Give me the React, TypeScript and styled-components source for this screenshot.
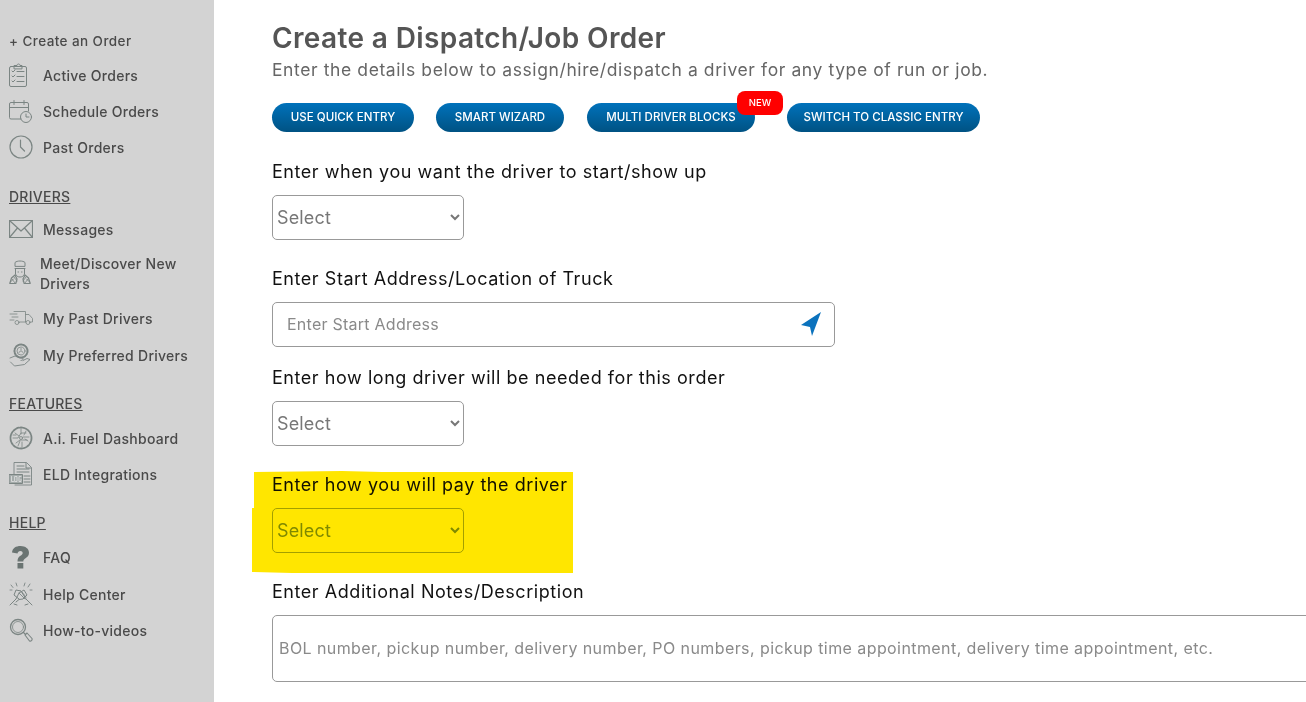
import React from "react";
import styled, { createGlobalStyle } from "styled-components";

const FONT = `Inter, "Open Sans", "Liberation Sans", sans-serif`;

const Global = createGlobalStyle`
  html, body { margin: 0; padding: 0; background: #fff; height: 100%; overflow: hidden; }
  #root { height: 702px; }
`;

const Page = styled.div`
  position: relative;
  display: flex;
  width: 1306px;
  height: 702px;
  overflow: hidden;
  font-family: ${FONT};
`;

const Sidebar = styled.nav`
  flex: 0 0 214px;
  box-sizing: border-box;
  padding: 32px 0 0 9px;
  background: #d3d3d3;
  color: #4a4a4a;
  font-size: 14px;
  letter-spacing: 0.27px;
  font-weight: 500;
`;

const CreateLink = styled.div`
  height: 18px;
  line-height: 18px;
  margin-bottom: 7px;
  font-size: 13.5px;
  letter-spacing: 0.42px;
`;

const Group = styled.div<{ $gap?: number }>`
  margin-bottom: ${(p) => p.$gap ?? 0}px;
`;

const Heading = styled.div<{ $mb: number }>`
  height: 18px;
  line-height: 18px;
  margin-bottom: ${(p) => p.$mb}px;
  text-decoration: underline;
`;

const Row = styled.div<{ $h?: number }>`
  display: flex;
  align-items: center;
  height: ${(p) => p.$h ?? 36}px;
`;

const IconSlot = styled.span`
  flex: 0 0 34px;
  display: flex;
  align-items: center;
  color: #7b8583;
`;

const TwoLine = styled.span`
  margin-left: -3px;
  padding-top: 2px;
  line-height: 20px;
  width: 150px;
`;

const Main = styled.main`
  flex: 1;
  min-width: 0;
  box-sizing: border-box;
  padding: 20px 0 0 58px;
`;

const Title = styled.h1`
  margin: 0;
  height: 36px;
  line-height: 36px;
  font-size: 28px;
  letter-spacing: 0.37px;
  font-weight: 600;
  color: #555;
`;

const Subtitle = styled.p`
  margin: 2px 0 0;
  height: 24px;
  line-height: 24px;
  font-size: 17.5px;
  letter-spacing: 0.6px;
  font-weight: 400;
  color: #666;
`;

const Buttons = styled.div`
  display: flex;
  margin-top: 21px;
  height: 29px;
`;

const Pill = styled.div<{ $w: number; $ml?: number }>`
  position: relative;
  box-sizing: border-box;
  width: ${(p) => p.$w}px;
  margin-left: ${(p) => p.$ml ?? 0}px;
  height: 29px;
  line-height: 29px;
  border-radius: 15px;
  background: linear-gradient(#0072bb, #005283);
  color: #fff;
  font-size: 11.5px;
  letter-spacing: 0.03px;
  font-weight: 500;
  text-align: center;
`;

const Badge = styled.span`
  position: absolute;
  top: -12px;
  right: -28px;
  width: 46px;
  height: 24px;
  line-height: 24px;
  border-radius: 8px;
  background: #ff0000;
  color: #fff;
  font-size: 9.5px;
  letter-spacing: 0;
  text-align: center;
`;

const Label = styled.label<{ $top: number }>`
  display: block;
  margin-top: ${(p) => p.$top}px;
  height: 24px;
  line-height: 24px;
  font-size: 18px;
  letter-spacing: 0.55px;
  font-weight: 400;
  color: #111;
`;

const Picker = styled.select<{ $tinted?: boolean }>`
  display: block;
  box-sizing: border-box;
  width: 192px;
  height: 45px;
  margin-top: 11px;
  padding: 0;
  background: #fff;
  border: 1px solid ${(p) => (p.$tinted ? "#a3b000" : "#999")};
  border-radius: 5px;
  color: ${(p) => (p.$tinted ? "#7f9800" : "#777")};
  font-family: ${FONT};
  font-size: 18px;
  letter-spacing: 0.15px;
`;

const AddressBox = styled.div`
  display: flex;
  align-items: center;
  box-sizing: border-box;
  width: 563px;
  height: 45px;
  margin-top: 11px;
  padding: 0 12px 0 14px;
  border: 1px solid #999;
  border-radius: 5px;
`;

const AddressInput = styled.input`
  flex: 1;
  min-width: 0;
  border: 0;
  outline: 0;
  padding: 0 0 2px;
  background: transparent;
  font-family: ${FONT};
  font-size: 16px;
  letter-spacing: 0.25px;
  &::placeholder { color: #8a8a8a; opacity: 1; }
`;

const Notes = styled.textarea`
  display: block;
  box-sizing: border-box;
  width: 1100px;
  height: 67px;
  margin-top: 11px;
  padding: 22px 6px 0;
  border: 1px solid #999;
  border-radius: 5px;
  outline: 0;
  resize: none;
  font-family: ${FONT};
  font-size: 16px;
  letter-spacing: 0.42px;
  line-height: 20px;
  &::placeholder { color: #8a8a8a; opacity: 1; }
`;

const Highlight = styled.div`
  position: absolute;
  left: 252px;
  top: 471px;
  width: 321px;
  height: 102px;
  background: #ffe600;
  mix-blend-mode: multiply;
  pointer-events: none;
  clip-path: polygon(2px 1px, 90px 0, 130px 1px, 321px 1px, 321px 102px, 40px 102px, 0 101px, 0 37px, 2px 37px);
`;

const Svg = ({ w = 24, h = 24, children }: { w?: number; h?: number; children: React.ReactNode }) => (
  <svg width={w} height={h} viewBox={`0 0 ${w} ${h}`} fill="none" stroke="currentColor" strokeWidth="1" strokeLinecap="round" strokeLinejoin="round">
    {children}
  </svg>
);

const Clipboard = () => (
  <Svg w={20} h={24}>
    <rect x="0.5" y="3.5" width="17" height="20" rx="1.5" />
    <path d="M5 5.5V2.5h3c0-2 3-2 3 0h2v3z" />
    <path d="M3 8l1 1 2-2M3 13l1 1 2-2M3 18l1 1 2-2M8 8.500h7M8 13.500h7M8 18.500h7" />
  </Svg>
);
const Calendar = () => (
  <Svg w={24} h={24}>
    <path d="M12 20H2A1.500 1.500 0 0 1 .5 18.500V5A1.500 1.500 0 0 1 2 3.500h16A1.500 1.500 0 0 1 19.500 5V12" />
    <path d="M.5 8.500h19M5 1.500v4M15 1.500v4" />
    <circle cx="17" cy="18" r="5.500" />
    <path d="M17 15v3h3" />
  </Svg>
);
const Clock = () => (
  <Svg w={24} h={24}>
    <circle cx="12" cy="12" r="11" strokeWidth="1.2" />
    <path d="M11.500 5v7l4 4" strokeWidth="1.2" />
  </Svg>
);
const Mail = () => (
  <Svg w={24} h={18}>
    <rect x="0.5" y="0.5" width="23" height="17" strokeWidth="1.2" />
    <path d="M.5.5L12 11 23.500.5M.5 17.500l8-9.500M23.500 17.500l-8-9.500" strokeWidth="1.2" />
  </Svg>
);
const Chauffeur = () => (
  <Svg w={22} h={26}>
    <path d="M6 6V2.500C8 .5 14 .5 16 2.500V6zM6 8.500h10M6.500 9v5c1 4 8 4 9 0V9" />
    <path d="M9 12h.5M12.500 12h.5" />
    <path d="M6 15L2.500 18 .8 23.500h6L8 19zM16 15l3.500 3 1.700 5.500h-6L14 19z" strokeWidth="1.200" />
    <path d="M3 19l3 4M5 17l3 4M1.500 22l3-3M19 19l-3 4M17 17l-3 4M20.500 22l-3-3" strokeWidth=".8" />
  </Svg>
);
const Truck = () => (
  <Svg w={24} h={16}>
    <path d="M5 1.500h11.500v10.500H10.500M16.500 4.500h3.500l3.500 4v3.500h-2M16.500 12h.5" strokeWidth=".8" />
    <circle cx="8" cy="12.500" r="2" strokeWidth=".8" />
    <circle cx="19" cy="12.500" r="2" strokeWidth=".8" />
    <path d="M1 4h7M3 7h6M1 10h4" strokeWidth=".8" />
  </Svg>
);
const HandGear = () => (
  <Svg w={22} h={24}>
    <circle cx="12" cy="8" r="6.500" strokeDasharray="1.500 1.200" strokeWidth="2" />
    <circle cx="12" cy="8" r="4" strokeWidth=".8" />
    <path d="M10 9.500c0-2 4-2 4 0M12 5.500v1.500" strokeWidth=".8" />
    <path d="M1 15l5-2c2 0 3 2 7 2 2 0 1.500 2.500-1 2.500M1.500 19l4 4 10-1.500 5.500-5-3-1-4 2" strokeWidth=".9" />
  </Svg>
);
const Brain = () => (
  <Svg w={24} h={24}>
    <circle cx="12" cy="12" r="10.500" strokeDasharray="2.500 1.200" strokeWidth="1.800" />
    <path d="M4 12h5l3-5h5M6 7l4 3M7 17l4-3h7M12 3v5M13 21v-5M14 11h6M4 9h3M9 20l2-5M17 5l-2 4M19 15l-3-2" strokeWidth=".8" />
    <circle cx="12" cy="12" r="1.500" strokeWidth=".8" />
  </Svg>
);
const Log = () => (
  <Svg w={24} h={24}>
    <path d="M5 13V.5h12.500l5 5v17.500H6" strokeWidth=".9" />
    <path d="M17 1v5h5M8 4h7M8 7h12M8 10h12M15 14h6M15 17h6M15 20h6" strokeWidth="1" />
    <rect x=".5" y="12.500" width="13" height="9" fill="#a4abaa" stroke="#7b8583" />
    <path d="M2.500 14.500v5h2M6 14.500h2v5H6zM12 14.500h-2v5h2v-2" strokeWidth=".8" stroke="#e2e2e2" />
  </Svg>
);
const Question = () => (
  <svg width="21" height="24" viewBox="0 0 21 24">
    <path transform="translate(-1 0)" fill="#6a7472" d="M4 7.500C4.500 3 8 1 12.500 1 17.500 1 21 3.800 21 7.700c0 3-1.700 4.300-3.500 5.500-1.500 1-2.200 1.600-2.200 3.300H9.500c0-3 .9-4.500 2.900-5.800 1.300-.9 2.300-1.500 2.300-2.800 0-1.200-1-2-2.400-2-1.500 0-2.500 1-2.800 2.600zM9.500 18h5.800v5.500H9.500z" />
  </svg>
);
const Hands = () => (
  <Svg w={24} h={24}>
    <path d="M1 23l6-6 3-6 5-3 3 5-4 4-4 .5-3 2.500M23 23l-6-6-5-8-5-1-2 5 5 4M5 22l3 1M19 22l-3 1" />
    <path d="M10 11l6 6M12 9l5 6M2 3l2 2.500M7 1l1 3M21 2l-2 3M16 1l-1 3M1 8h2M23 8h-2" strokeWidth=".9" />
  </Svg>
);
const Magnifier = () => (
  <Svg w={24} h={24}>
    <circle cx="9" cy="9" r="7.500" strokeWidth="1.300" />
    <circle cx="9" cy="9" r="5.500" strokeWidth=".8" />
    <path d="M14.500 14.500l2 2M16 17l2-2 5 5.500c.5 2-1 3-2.500 2.500z" strokeWidth="1.100" />
  </Svg>
);
const Arrow = () => (
  <svg width="22" height="25" viewBox="0 0 22 25" style={{ flex: "none" }}>
    <path fill="#0b72bd" d="M1 13L21 0l-9 24-2-9z" />
  </svg>
);

const Opt = () => <option>Select</option>;

export default function App() {
  return (
    <Page>
      <Global />
      <Sidebar>
        <CreateLink>+ Create an Order</CreateLink>
        <Group $gap={23}>
          <Row><IconSlot><Clipboard /></IconSlot>Active Orders</Row>
          <Row><IconSlot><Calendar /></IconSlot>Schedule Orders</Row>
          <Row><IconSlot><Clock /></IconSlot>Past Orders</Row>
        </Group>
        <Heading $mb={5}>DRIVERS</Heading>
        <Group $gap={22}>
          <Row><IconSlot><Mail /></IconSlot>Messages</Row>
          <Row $h={52}><IconSlot><Chauffeur /></IconSlot><TwoLine>Meet/Discover New Drivers</TwoLine></Row>
          <Row $h={38}><IconSlot><Truck /></IconSlot>My Past Drivers</Row>
          <Row><IconSlot><HandGear /></IconSlot>My Preferred Drivers</Row>
        </Group>
        <Heading $mb={7}>FEATURES</Heading>
        <Group $gap={22}>
          <Row><IconSlot><Brain /></IconSlot>A.i. Fuel Dashboard</Row>
          <Row><IconSlot><Log /></IconSlot>ELD Integrations</Row>
        </Group>
        <Heading $mb={7}>HELP</Heading>
        <Group>
          <Row><IconSlot><Question /></IconSlot>FAQ</Row>
          <Row $h={38}><IconSlot><Hands /></IconSlot>Help Center</Row>
          <Row $h={34}><IconSlot><Magnifier /></IconSlot>How-to-videos</Row>
        </Group>
      </Sidebar>
      <Main>
        <Title>Create a Dispatch/Job Order</Title>
        <Subtitle>Enter the details below to assign/hire/dispatch a driver for any type of run or job.</Subtitle>
        <Buttons>
          <Pill $w={142}>USE QUICK ENTRY</Pill>
          <Pill $w={128} $ml={22}>SMART WIZARD</Pill>
          <Pill $w={168} $ml={23}>MULTI DRIVER BLOCKS<Badge>NEW</Badge></Pill>
          <Pill $w={193} $ml={32}>SWITCH TO CLASSIC ENTRY</Pill>
        </Buttons>
        <Label $top={28}>Enter when you want the driver to start/show up</Label>
        <Picker><Opt /></Picker>
        <Label $top={27}>Enter Start Address/Location of Truck</Label>
        <AddressBox>
          <AddressInput placeholder="Enter Start Address" />
          <Arrow />
        </AddressBox>
        <Label $top={19}>Enter how long driver will be needed for this order</Label>
        <Picker><Opt /></Picker>
        <Label $top={27}>Enter how you will pay the driver</Label>
        <Picker $tinted><Opt /></Picker>
        <Label $top={27}>Enter Additional Notes/Description</Label>
        <Notes placeholder="BOL number, pickup number, delivery number, PO numbers, pickup time appointment, delivery time appointment, etc." />
      </Main>
      <Highlight />
    </Page>
  );
}
